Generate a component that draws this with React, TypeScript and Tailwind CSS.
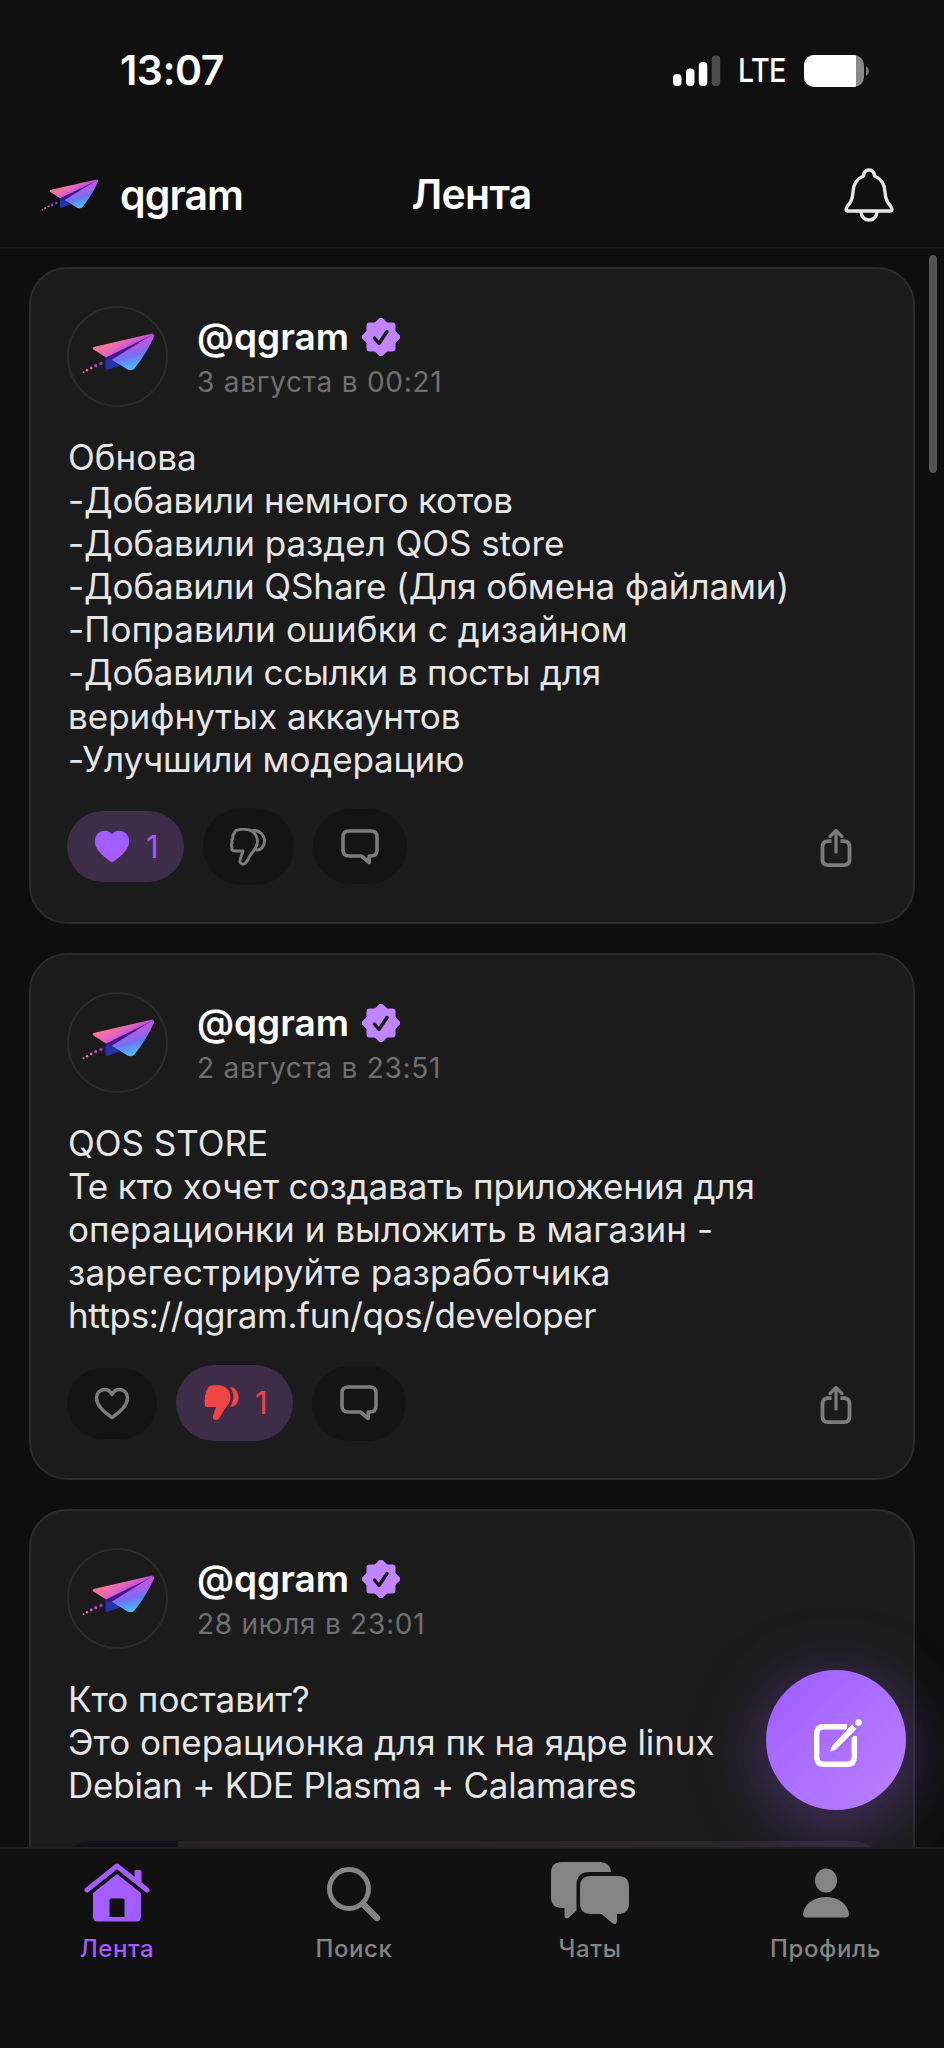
import React, { useId } from "react";

function Plane({ className }: { className: string }) {
  const id = useId();
  return (
    <svg viewBox="0 0 73 42" className={className} fill="none">
      <defs>
        <linearGradient id={id + "a"} x1="34" y1="8" x2="41" y2="20" gradientUnits="userSpaceOnUse">
          <stop offset="0" stopColor="#f5719f" />
          <stop offset="0.5" stopColor="#e062c4" />
          <stop offset="1" stopColor="#b04be0" />
        </linearGradient>
        <linearGradient id={id + "b"} x1="48" y1="13" x2="54" y2="36" gradientUnits="userSpaceOnUse">
          <stop offset="0" stopColor="#b858e4" />
          <stop offset="0.45" stopColor="#6f74f2" />
          <stop offset="1" stopColor="#45c6ff" />
        </linearGradient>
      </defs>
      <path d="M23.700 24 L71 1 L36 31.700 L26 36.500 Q23.700 37.200 23.700 35.500 Z" fill="#43188f" />
      <path d="M23.700 27 V35.500 Q23.700 37 26 36.400 L38 32.500 L29.700 26.700 Z" fill="#2434a8" />
      <path d="M11.500 16.500 Q9.500 14.500 12.500 13.700 L70.500 0.500 Q72 0.500 70.500 1.800 L24 24.500 Z" fill={`url(#${id}a)`} />
      <path d="M29.700 26.700 L70 1.800 Q73 0.500 72 3.500 Q65.500 19 52.500 35.500 Q50 38.500 45.500 36.500 Z" fill={`url(#${id}b)`} />
      <circle cx="19" cy="30.500" r="1.700" fill="#8a3bd8" />
      <circle cx="13.700" cy="32.700" r="1.600" fill="#b545c8" />
      <circle cx="9.200" cy="35" r="1.400" fill="#dd5fb0" />
      <circle cx="5" cy="37.200" r="1.200" fill="#e879a0" />
      <circle cx="1.500" cy="39.300" r="1" fill="#d070a0" />
    </svg>
  );
}

function Verified() {
  return (
    <svg viewBox="0 0 38 38" className="h-[38px] w-[38px]">
      <g fill="#c084fc" stroke="#c084fc" strokeWidth="6" strokeLinejoin="round">
        <rect x="7.500" y="7.500" width="23" height="23" />
        <rect x="7.500" y="7.500" width="23" height="23" transform="rotate(45 19 19)" />
      </g>
      <path d="M12.500 20 L17 25.500 L25 13.500" fill="none" stroke="#1b1b1b" strokeWidth="3.400" strokeLinecap="round" strokeLinejoin="round" />
    </svg>
  );
}

function Heart({ filled }: { filled?: boolean }) {
  return (
    <svg viewBox="0 0 36 33" className="h-[33px] w-9">
      <path
        d="M18 30.500 C12 26.500 2.500 19.500 2.500 11 C2.500 6 6 2.500 10.500 2.500 C14 2.500 16.500 4.500 18 7.500 C19.500 4.500 22 2.500 25.500 2.500 C30 2.500 33.500 6 33.500 11 C33.500 19.500 24 26.500 18 30.500 Z"
        fill={filled ? "#a35cff" : "none"}
        stroke={filled ? "#a35cff" : "#7c7c7c"}
        strokeWidth="3.400"
        strokeLinejoin="round"
      />
    </svg>
  );
}

function Dislike({ filled }: { filled?: boolean }) {
  const hand =
    "M6 2.500 C9 1.200 14 1.200 18 1.600 C24 2.500 27.500 8 27.500 13.500 C27.500 19.500 23.500 22.500 20.500 27 C18.500 30 17.500 33 15.500 35 C14 36.800 10.500 36.500 10 34 C9.500 31 12 27 13 23 L5 23 C2 23 1.200 21.500 2 19 C1.200 17.500 1.200 16 2.200 14.800 C1.500 13 1.700 11 3 10 C2.500 7.500 3 6 4.500 5.500 C4.500 4.300 5 3.200 6 2.500 Z";
  return filled ? (
    <svg viewBox="0 0 36 38" className="h-[38px] w-9" fill="#ef4545">
      <path d={hand} />
      <path d="M26.500 3 C32 3 35.500 8 35.500 13.500 C35.500 19.500 31.500 23.500 27 22.500 C31.500 17 31.500 8 26.500 3 Z" />
    </svg>
  ) : (
    <svg viewBox="0 0 36 38" className="h-[38px] w-9" fill="none" stroke="#7c7c7c" strokeWidth="2.900" strokeLinejoin="round" strokeLinecap="round">
      <path d={hand} />
      <path d="M23 2.500 C30 1.800 34.500 7.500 34.500 13 C34.500 18.500 31 22.500 26.500 22" />
    </svg>
  );
}

function Comment() {
  return (
    <svg viewBox="0 0 38 36" className="h-9 w-[38px]" fill="none" stroke="#7c7c7c" strokeWidth="3.600" strokeLinejoin="round">
      <path d="M8 2 H30 Q36 2 36 8 V21 Q36 27 30 27 H28.200 V33.500 L20.500 27 H8 Q2 27 2 21 V8 Q2 2 8 2 Z" />
    </svg>
  );
}

function Share() {
  return (
    <svg viewBox="0 0 32 40" className="h-10 w-8" fill="none" stroke="#7c7c7c" strokeLinecap="round" strokeLinejoin="round">
      <path d="M11.500 13.200 H8 Q2.500 13.200 2.500 19 V31.500 Q2.500 37.200 8 37.200 H24 Q29.500 37.200 29.500 31.500 V19 Q29.500 13.200 24 13.200 H20.500" strokeWidth="3.800" strokeLinecap="butt" />
      <path d="M16 24 V3.500 M10 8.500 L16 2.500 L22 8.500" strokeWidth="3.200" />
    </svg>
  );
}

type Line = { text: string; tracking: string };

type Post = {
  date: string;
  lines: Line[];
  liked?: boolean;
  disliked?: boolean;
  height: string;
};

const posts: Post[] = [
  {
    date: "3 августа в 00:21",
    lines: [
      { text: "Обнова", tracking: "tracking-normal" },
      { text: "-Добавили немного котов", tracking: "tracking-[-0.14px]" },
      { text: "-Добавили раздел QOS store", tracking: "tracking-[-0.05px]" },
      { text: "-Добавили QShare (Для обмена файлами)", tracking: "tracking-[-0.1px]" },
      { text: "-Поправили ошибки с дизайном", tracking: "tracking-[0.15px]" },
      { text: "-Добавили ссылки в посты для", tracking: "tracking-[-0.17px]" },
      { text: "верифнутых аккаунтов", tracking: "tracking-normal" },
      { text: "-Улучшили модерацию", tracking: "tracking-[-0.12px]" },
    ],
    liked: true,
    height: "h-[657px]",
  },
  {
    date: "2 августа в 23:51",
    lines: [
      { text: "QOS STORE", tracking: "tracking-normal" },
      { text: "Те кто хочет создавать приложения для", tracking: "tracking-[-0.11px]" },
      { text: "операционки и выложить в магазин -", tracking: "tracking-[0.04px]" },
      { text: "зарегестрируйте разработчика", tracking: "tracking-[0.18px]" },
      { text: "https://qgram.fun/qos/developer", tracking: "tracking-[-0.38px]" },
    ],
    disliked: true,
    height: "h-[527px]",
  },
  {
    date: "28 июля в 23:01",
    lines: [
      { text: "Кто поставит?", tracking: "tracking-[-0.05px]" },
      { text: "Это операционка для пк на ядре linux", tracking: "tracking-[-0.06px]" },
      { text: "Debian + KDE Plasma + Calamares", tracking: "tracking-[-0.23px]" },
    ],
    height: "h-[527px]",
  },
];

const pill = "flex items-center rounded-full";

function Card({ post, last }: { post: Post; last: boolean }) {
  return (
    <article className={`${post.height} shrink-0 rounded-[38px] border-2 border-[#2b2b2b] bg-[#1b1b1b] px-[36px] pt-[36px]`}>
      <header className="flex h-[102px] items-center">
        <div className="flex h-[101px] w-[101px] shrink-0 items-center justify-center rounded-full border-2 border-[#2b2b2b]">
          <Plane className="mt-[-4px] ml-[2px] h-[42px] w-[73px]" />
        </div>
        <div className="ml-[29px] pt-[5px]">
          <div className="flex h-[46px] items-center gap-[13px]">
            <span className="text-[37px] leading-[46px] font-semibold tracking-[0px] text-white">@qgram</span>
            <Verified />
          </div>
          <div className="text-[28px] leading-[44px] tracking-[0.75px] text-[#6f6f6f]">{post.date}</div>
        </div>
      </header>
      <div className="mt-[29px] pl-px text-[35px] leading-[43.1px] whitespace-nowrap text-[#e6e6e6]">
        {post.lines.map((l) => (
          <div key={l.text} className={l.tracking}>
            {l.text}
          </div>
        ))}
      </div>
      {last ? (
        <div className="mt-[34px] flex h-[300px] overflow-hidden rounded-[22px]">
          <div className="w-[111px] bg-[#10121f]" />
          <div className="flex-1 bg-gradient-to-r from-[#28221f] to-[#2c2530]" />
        </div>
      ) : (
        <div className="mt-[27px] flex h-[78px] items-center">
          <div className={`${pill} h-[71px] pl-[27px] ${post.liked ? "w-[117px] gap-[16px] bg-[#3d2d48]" : "w-[90px] bg-[#141414]"}`}>
            <Heart filled={post.liked} />
            {post.liked && <span className="text-[31px] text-[#a35cff]">1</span>}
          </div>
          <div className={`${pill} ml-[19px] pl-[27px] ${post.disliked ? "h-[76px] w-[117px] gap-[16px] bg-[#3d2d48]" : "h-[77px] w-[91px] bg-[#141414]"}`}>
            <Dislike filled={post.disliked} />
            {post.disliked && <span className="text-[31px] text-[#ef4545]">1</span>}
          </div>
          <div className={`${pill} ml-[19px] h-[75px] w-[94px] justify-center bg-[#141414]`}>
            <Comment />
          </div>
          <div className="mt-[3px] mr-[25px] ml-auto">
            <Share />
          </div>
        </div>
      )}
    </article>
  );
}

export default function App() {
  return (
    <div className="relative flex h-[2048px] w-[944px] flex-col overflow-hidden bg-[#0e0e0e] font-['Inter','Liberation_Sans',sans-serif] text-white">
      <div className="flex h-[142px] shrink-0 items-center bg-[#101010] pr-[74px] pl-[120px]">
        <span className="text-[41px] font-semibold tracking-[-0.5px]">13:07</span>
        <svg viewBox="0 0 48 32" className="ml-auto h-8 w-12" fill="#fff">
          <rect x="0" y="19" width="8.500" height="12" rx="3.700" />
          <rect x="13" y="13.500" width="8.500" height="17.500" rx="3.700" />
          <rect x="25.800" y="7" width="8.500" height="24" rx="3.700" />
          <rect x="38.700" y="0.500" width="8.500" height="30.500" rx="3.700" fill="#4b4b4b" />
        </svg>
        <span className="ml-[10px] origin-right scale-x-[0.87] text-[33px] font-medium tracking-[-0.8px]">LTE</span>
        <svg viewBox="0 0 66 32" className="ml-[18px] h-8 w-[66px]">
          <defs>
            <clipPath id="batt">
              <rect width="60" height="32" rx="10" />
            </clipPath>
          </defs>
          <g clipPath="url(#batt)">
            <rect width="60" height="32" fill="#8a8a8a" />
            <rect width="52" height="32" fill="#fff" />
          </g>
          <path d="M62 11 Q65 13 65 16 Q65 19 62 21 Z" fill="#777" />
        </svg>
      </div>
      <header className="grid h-[107px] shrink-0 grid-cols-3 items-center border-b-2 border-[#171717] bg-[#101010] pr-[50px] pl-[41px]">
        <div className="flex items-center pt-[2px]">
          <Plane className="h-[33px] w-[58px]" />
          <span className="ml-[21px] text-[41px] font-semibold tracking-[-0.9px]">qgram</span>
        </div>
        <h1 className="pt-px pl-[8px] text-center text-[41px] font-semibold tracking-[-0.7px]">Лента</h1>
        <svg viewBox="0 0 50 54" className="ml-auto h-[54px] w-[50px]" fill="none" stroke="#e6e6e6" strokeWidth="3.400" strokeLinejoin="round">
          <path d="M19.500 8 Q20 2 25 2 Q30 2 30.500 8 Q40.500 12 41 24 Q41.500 33 46.500 38 Q49.500 43 46 43 H4 Q0.500 43 3.500 38 Q8.500 33 9 24 Q9.500 12 19.500 8 Z" />
          <path d="M17 44 Q18 52 25 52 Q32 52 33 44" />
        </svg>
      </header>
      <main className="flex h-[1598px] shrink-0 flex-col gap-[29px] overflow-hidden px-[29px] pt-[18px]">
        {posts.map((p, i) => (
          <Card key={p.date} post={p} last={i === 2} />
        ))}
      </main>
      <nav className="z-10 grid h-[201px] shrink-0 grid-cols-4 border-t-2 border-[#1f1f1f] bg-[#111111] text-center text-[24px] font-medium tracking-[0.6px] text-[#848484]">
        <div className="flex flex-col items-center pr-[2px] text-[#a35cff]">
          <svg viewBox="0 0 66 60" className="mt-[14px] h-[60px] w-[66px]" fill="currentColor">
            <path d="M3 27 L33 3 L63 27" fill="none" stroke="currentColor" strokeWidth="5" strokeLinecap="round" strokeLinejoin="round" />
            <path d="M50.500 8 Q50.500 7 52 7 H56 Q57.500 7 57.500 8.500 V23 L50.500 17 Z" />
            <path d="M33 11 L57 30 V54 Q57 58.500 52.500 58.500 H13.500 Q9 58.500 9 54 V30 Z M27 35.500 Q25.500 35.500 25.500 37 V54 H40.500 V37 Q40.500 35.500 39 35.500 Z" fillRule="evenodd" />
          </svg>
          <span className="mt-[8px] leading-[36px]">Лента</span>
        </div>
        <div className="flex flex-col items-center">
          <svg viewBox="0 0 54 56" className="mt-[17px] h-[56px] w-[54px]" fill="none" stroke="currentColor">
            <circle cx="22" cy="23" r="19.500" strokeWidth="5" />
            <path d="M36 38 L50 52" strokeWidth="6.500" strokeLinecap="round" />
          </svg>
          <span className="mt-[9px] leading-[36px]">Поиск</span>
        </div>
        <div className="flex flex-col items-center">
          <svg viewBox="0 0 78 64" className="mt-[12px] h-16 w-[78px]" fill="currentColor">
            <path d="M11 1 H49 Q59 1 60 11 H39 Q25.500 11 25.500 24 V49.500 L18 56.500 Q14 59 13.500 55 V47 H11 Q0 47 0 36 V12 Q0 1 11 1 Z" />
            <path d="M40 15 H67 Q78 15 78 26 V42 Q78 53 67 53 H66 V60 Q65.500 65 61 62 L50.500 53 H40 Q29 53 29 42 V26 Q29 15 40 15 Z" />
          </svg>
          <span className="mt-[6px] leading-[36px]">Чаты</span>
        </div>
        <div className="flex flex-col items-center pr-px">
          <svg viewBox="0 0 46 50" className="mt-[19px] h-[50px] w-[46px]" fill="currentColor">
            <ellipse cx="23" cy="12.500" rx="11" ry="12" />
            <path d="M4 49.500 Q0 49.500 0 46 C1 36 11 29 23 29 C35 29 45 36 46 46 Q46 49.500 42 49.500 Z" />
          </svg>
          <span className="mt-[13px] leading-[36px]">Профиль</span>
        </div>
      </nav>
      <div className="absolute top-[255px] right-[7px] h-[218px] w-[8px] rounded-full bg-[#515151]" />
      <div className="absolute inset-x-0 top-[249px] h-[1598px] overflow-hidden">
        <button className="absolute top-[1421px] left-[766px] flex h-[140px] w-[140px] items-center justify-center rounded-full bg-gradient-to-br from-[#9f5cff] to-[#bb80ff] shadow-[0_12px_72px_rgba(163,92,255,0.4)]">
          <svg viewBox="0 0 48 48" className="mt-[6px] ml-[4px] h-12 w-12" fill="none" stroke="#fff">
            <path d="M33 7.800 H10 Q2.700 7.800 2.700 15 V38 Q2.700 45.300 10 45.300 H33 Q40.300 45.300 40.300 38 V17" strokeWidth="5.400" />
            <path d="M41.500 8 L20 29.500" stroke="#aa69ff" strokeWidth="10" />
            <path d="M38 5.500 L42.500 10 L22 30.500 L17 32.500 Q16 32.500 16.500 31 L18.500 26.500 Z" fill="#fff" stroke="none" />
            <circle cx="44.500" cy="3.500" r="3.200" fill="#fff" stroke="none" />
          </svg>
        </button>
      </div>
    </div>
  );
}
